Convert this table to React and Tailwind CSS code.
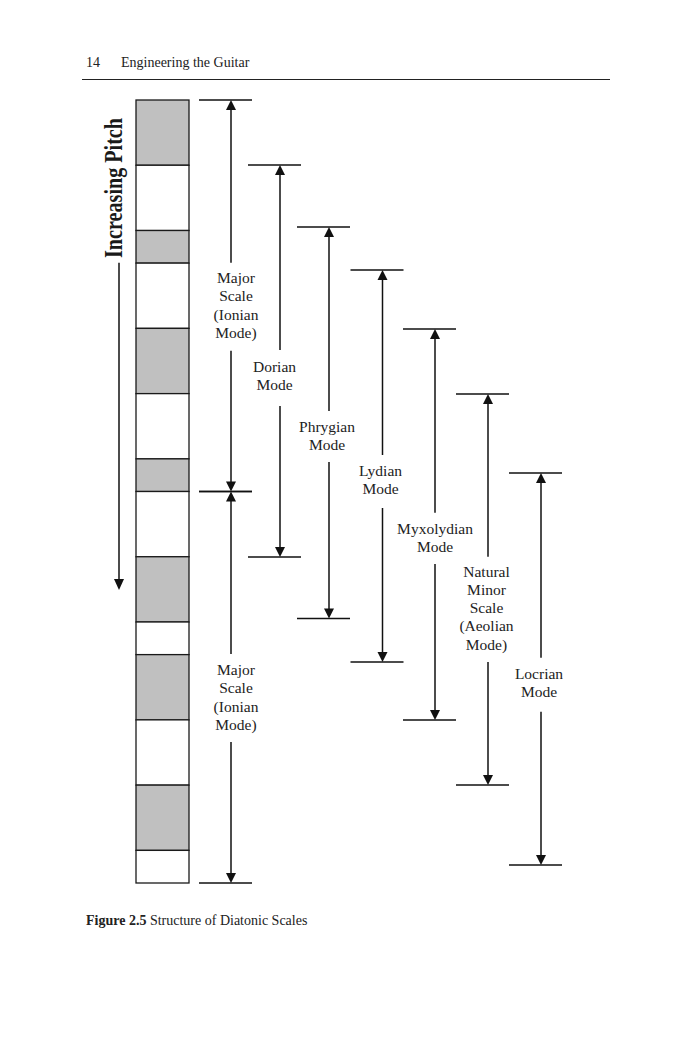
import React from "react";

// bar column: units of a half step, top to bottom
const U = 32.625;
const blocks = [
  [2, true], [2, false], [1, true], [2, false], [2, true], [2, false], [1, true],
  [2, false], [2, true], [1, false], [2, true], [2, false], [2, true], [1, false],
];

const modes = [
  { x: 231, top: 100, bottom: 491.5, gap: [262.7, 350.7], cx: 236, ly: 269.2, lines: ["Major", "Scale", "(Ionian", "Mode)"] },
  { x: 231, top: 491.5, bottom: 883, gap: [654, 742], cx: 236, ly: 661, lines: ["Major", "Scale", "(Ionian", "Mode)"] },
  { x: 280, top: 165, bottom: 557, gap: [350, 406], cx: 274.5, ly: 357.5, lines: ["Dorian", "Mode"] },
  { x: 329, top: 227, bottom: 618.5, gap: [411, 462], cx: 327, ly: 418, lines: ["Phrygian", "Mode"] },
  { x: 382.5, top: 270, bottom: 662, gap: [455, 508], cx: 380.5, ly: 462, lines: ["Lydian", "Mode"] },
  { x: 435, top: 329, bottom: 720, gap: [512.7, 564], cx: 435, ly: 520, lines: ["Myxolydian", "Mode"] },
  { x: 488, top: 394, bottom: 785, gap: [556.7, 662], cx: 486.5, ly: 562.5, lines: ["Natural", "Minor", "Scale", "(Aeolian", "Mode)"] },
  { x: 541, top: 473, bottom: 865, gap: [657.7, 711.7], cx: 539, ly: 665, lines: ["Locrian", "Mode"] },
];

const OFF = 80; // figure box starts under the running head

const Diagram = () => {
  let y = 100;
  const rects = blocks.map(([n, grey], i) => {
    const r = (
      <rect key={i} x={136} y={y} width={53} height={n * U} fill={grey ? "#c0c0c0" : "#fff"} stroke="#1a1a1a" strokeWidth={1.3} />
    );
    y += n * U;
    return r;
  });

  return (
    <svg className="absolute inset-0" width={692} height={815} viewBox={`0 ${OFF} 692 815`}>
      {rects}

      {/* increasing pitch arrow */}
      <line x1={119} y1={262.7} x2={119} y2={581} stroke="#111" strokeWidth={1.5} />
      <polygon points="119,590 114,579 124,579" fill="#111" />

      {modes.map((m, i) => (
        <g key={i} stroke="#111">
          <line x1={m.x - 32} y1={m.top} x2={m.x + 21} y2={m.top} strokeWidth={1.3} />
          <line x1={m.x - 32} y1={m.bottom} x2={m.x + 21} y2={m.bottom} strokeWidth={1.3} />
          <line x1={m.x} y1={m.top + 9} x2={m.x} y2={m.gap[0]} strokeWidth={1.5} />
          <line x1={m.x} y1={m.gap[1]} x2={m.x} y2={m.bottom - 9} strokeWidth={1.5} />
          <polygon points={`${m.x},${m.top} ${m.x - 5},${m.top + 10} ${m.x + 5},${m.top + 10}`} fill="#111" stroke="none" />
          <polygon points={`${m.x},${m.bottom} ${m.x - 5},${m.bottom - 10} ${m.x + 5},${m.bottom - 10}`} fill="#111" stroke="none" />
        </g>
      ))}
    </svg>
  );
};

const App = () => {
  return (
    <div className="w-[692px] min-h-[1050px] bg-white text-[#222] font-['Liberation_Serif',serif]">
      <div className="ml-[82px] w-[528px] pt-[55px] pb-[8px] border-b border-[#222] flex text-[14px] leading-[16px]">
        <span className="pl-[4px] w-[39px]">14</span>
        <span>Engineering the Guitar</span>
      </div>

      <div className="relative h-[815px]">
        <Diagram />

        <div
          className="absolute left-[113.4px] top-[108px] -translate-x-1/2 -translate-y-1/2 -rotate-90 scale-x-[0.805] whitespace-nowrap text-[25px] leading-[25px] font-bold text-[#1a1a1a]"
        >
          Increasing Pitch
        </div>

        {modes.map((m, i) => (
          <div
            key={i}
            className="absolute -translate-x-1/2 text-center whitespace-nowrap text-[15.5px] leading-[18.3px]"
            style={{ left: m.cx, top: m.ly - OFF }}
          >
            {m.lines.map(l => (
              <div key={l}>{l}</div>
            ))}
          </div>
        ))}
      </div>

      <p className="mt-[18px] pl-[86px] text-[14px] leading-[16px]">
        <span className="font-bold">Figure 2.5</span> Structure of Diatonic Scales
      </p>
    </div>
  );
};

export default App;
